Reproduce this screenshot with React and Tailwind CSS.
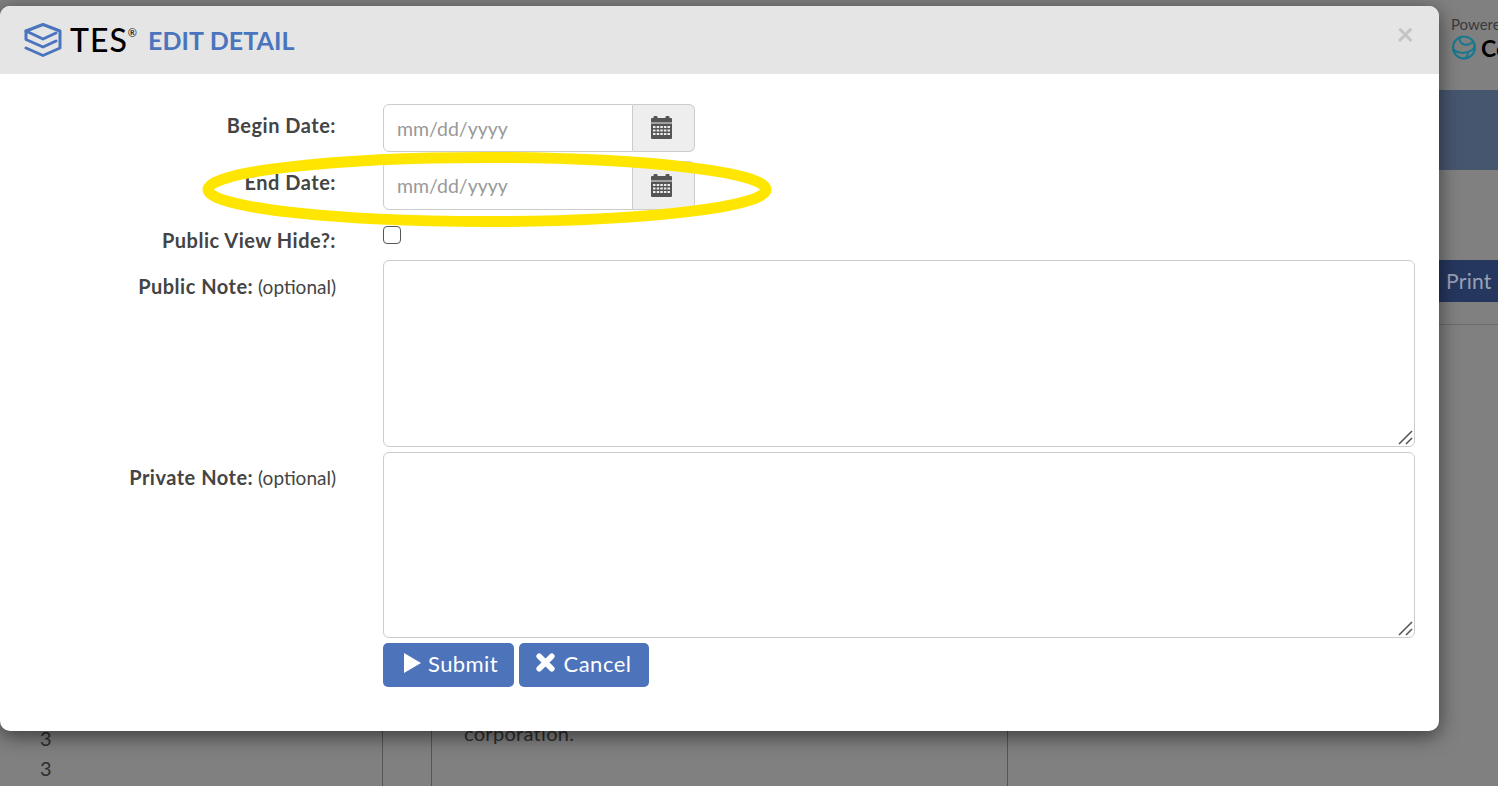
import React from 'react';

const fontStack = { fontFamily: 'Lato, "Open Sans", sans-serif' };

const LogoMark = () => (
  <svg width="38" height="34" viewBox="0 0 38 34" fill="none" stroke="#4a74bd" strokeWidth="3" strokeLinejoin="round" strokeLinecap="round">
    <path d="M2 25L19 32.5L36 25V8L19 1.5L2 8V16.5L19 24L32 18" />
    <path d="M2 8L19 16L32 10" />
  </svg>
);

const CalendarIcon = () => (
  <svg className="mb-px" width="21" height="23" viewBox="0 0 21 23" fill="#555">
    <rect x="2.5" y="0" width="4" height="4" rx="1" />
    <rect x="14.5" y="0" width="4" height="4" rx="1" />
    <path d="M1 2h19a1 1 0 0 1 1 1v3.5H0V3a1 1 0 0 1 1-1z" />
    <path fillRule="evenodd" d="M0 7.5h21V22a1 1 0 0 1-1 1H1a1 1 0 0 1-1-1zM2 10v2h2.5v-2zm3.7 0v2h2.5v-2zm3.6 0v2h2.5v-2zm3.6 0v2h2.5v-2zm3.6 0v2h2.5v-2zM2 13.5v2h2.5v-2zm3.7 0v2h2.5v-2zm3.6 0v2h2.5v-2zm3.6 0v2h2.5v-2zm3.6 0v2h2.5v-2zM2 17v2h2.5v-2zm3.7 0v2h2.5v-2zm3.6 0v2h2.5v-2zm3.6 0v2h2.5v-2zm3.6 0v2h2.5v-2z" />
  </svg>
);

const DateInput = ({ heightClass }) => (
  <div className={`flex w-[312px] ${heightClass}`}>
    <input
      type="text"
      placeholder="mm/dd/yyyy"
      className="h-full w-[250px] rounded-l-md border border-[#ccc] px-[13px] text-[19.5px] text-[#555] outline-none placeholder:text-[#999]"
      style={fontStack}
    />
    <span className="flex h-full flex-1 items-center justify-center rounded-r-md border border-l-0 border-[#ccc] bg-[#eee] pr-[4px]">
      <CalendarIcon />
    </span>
  </div>
);

const FieldRow = ({ label, hint, labelPad, className, children }) => (
  <div className={`flex ${className}`}>
    <div className={`w-[336px] shrink-0 text-right text-[20px] leading-[23px] tracking-[0.5px] text-[#444] ${labelPad}`}>
      <span className="font-bold">{label}</span>
      {hint && <span className="text-[19px] tracking-normal"> {hint}</span>}
    </div>
    <div className="ml-[47px] min-w-0 flex-1">{children}</div>
  </div>
);

const NoteBox = ({ heightClass }) => (
  <div className={`relative ${heightClass}`}>
    <textarea className="block h-full w-full resize-none rounded-md border border-[#ccc] outline-none" />
    <svg className="absolute bottom-[2px] right-[2px]" width="15" height="15" viewBox="0 0 15 15" stroke="#555" strokeWidth="1.6">
      <path d="M1 14L14 1" />
      <path d="M8 14L14 8" />
    </svg>
  </div>
);

const BackgroundPage = () => (
  <div className="relative h-[786px] w-[1498px] overflow-hidden bg-[#808080]" style={fontStack}>
    <div className="ml-[1451px] flex h-[90px] w-[200px] flex-col pt-[15px]">
      <span className="text-[15px] leading-[18px] text-[#3a3a3a]">Powered by</span>
      <div className="mt-[2px] flex items-center gap-[4px]">
        <svg width="26" height="26" viewBox="0 0 26 26" fill="none" stroke="#17788f" strokeWidth="2">
          <circle cx="13" cy="12.5" r="11" />
          <path d="M2 14c5 5 13 5 19 1 3-2 3-6 1-8-3 2-6 4-10 2-3-1-4-4-3-7M12 24c3-1 5-4 5-7" />
        </svg>
        <span className="text-[23px] font-bold leading-[26px] text-black">Cogent</span>
      </div>
    </div>
    <div className="h-20 bg-[#47566f]" />
    <div className="flex h-[132px] items-end justify-end">
      <span className="flex h-[42px] w-[200px] items-center bg-[#26375f] pl-[148px] text-[21px] tracking-[0.3px] text-[#98a1b5]">Print</span>
    </div>
    <div className="mt-[22px] h-px bg-[#6a6a6a]" />
    <div className="flex h-[461px] text-[20px] text-[#2e2e2e]">
      <div className="w-[383px] border-r border-[#555] pl-10 pt-[398px] leading-[30px]">
        <div>3</div>
        <div>3</div>
      </div>
      <div className="w-[49px] border-r border-[#555]" />
      <div className="w-[576px] border-r border-[#555] pl-[32px] pt-[394px] leading-[28px] tracking-[0.3px]">corporation.</div>
    </div>
  </div>
);

export default function App() {
  return (
    <div className="relative h-[786px] w-[1498px] overflow-hidden" style={fontStack}>
      <BackgroundPage />

      {/* modal sits over the page */}
      <div className="absolute left-0 top-[6px] w-[1439px] overflow-hidden rounded-[10px] bg-white shadow-[0_5px_20px_rgba(0,0,0,0.55)]">
        <div className="flex h-[68px] items-center bg-[#e5e5e5] pl-[24px] pr-[25px]">
          <LogoMark />
          <span className="ml-[8px] text-[32px] font-medium leading-none tracking-[1px] text-black">TES</span>
          <span className="mb-[16px] text-[11px] leading-none text-black">®</span>
          <span className="ml-[11px] text-[25px] font-bold leading-none tracking-[0.1px] text-[#4a74bd]">EDIT DETAIL</span>
          <span className="mb-[14px] ml-auto text-[30px] font-bold leading-none text-[#c4c4c4]">×</span>
        </div>

        <div className="pb-[44px] pr-[24px] pt-[30px]">
          <FieldRow label="Begin Date:" labelPad="pt-[10px]" className="mb-[9px]">
            <DateInput heightClass="h-12" />
          </FieldRow>
          <FieldRow label="End Date:" labelPad="pt-[10px]" className="mb-[16px]">
            <DateInput heightClass="h-[49px]" />
          </FieldRow>
          <FieldRow label="Public View Hide?:" labelPad="pt-[3px]" className="h-[34px]">
            <input
              type="checkbox"
              className="block h-[18px] w-[18px] appearance-none rounded-[4px] border border-[#555] bg-white"
            />
          </FieldRow>
          <FieldRow label="Public Note:" hint="(optional)" labelPad="pt-[15px]" className="mb-[5px]">
            <NoteBox heightClass="h-[187px]" />
          </FieldRow>
          <FieldRow label="Private Note:" hint="(optional)" labelPad="pt-[14px]">
            <NoteBox heightClass="h-[186px]" />
            <div className="mt-[5px] flex gap-[5px]">
              <button className="flex h-11 w-[131px] items-center justify-center gap-[7px] rounded-[5px] bg-[#4d73bb] pb-[4px] pl-[4px] text-[22px] tracking-[0.4px] text-white">
                <svg width="18" height="20" viewBox="0 0 18 20" fill="white"><path d="M1 0L18 10L1 20z" /></svg>
                Submit
              </button>
              <button className="flex h-11 w-[130px] items-center justify-center gap-[8px] rounded-[5px] bg-[#4d73bb] pb-[4px] text-[22px] tracking-[0.5px] text-white">
                <svg className="mb-[2px]" width="19" height="19" viewBox="0 0 19 19" stroke="white" strokeWidth="5.6" strokeLinecap="round">
                  <path d="M3.2 3.2L15.8 15.8M15.8 3.2L3.2 15.8" />
                </svg>
                Cancel
              </button>
            </div>
          </FieldRow>
        </div>
      </div>

      {/* yellow highlight drawn on top of the screenshot */}
      <svg className="absolute left-[196px] top-[146px]" width="582" height="88" viewBox="0 0 582 88" fill="none">
        <ellipse cx="291" cy="43.5" rx="279" ry="32" stroke="#ffe600" strokeWidth="11" />
      </svg>
    </div>
  );
}
